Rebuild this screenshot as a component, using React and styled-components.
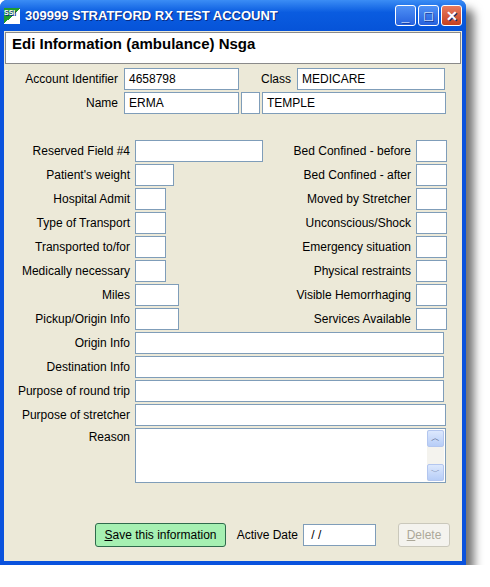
import React from "react";
import styled, { createGlobalStyle } from "styled-components";

const G = createGlobalStyle`
  body{margin:0;background:#fff;font-family:"Liberation Sans",Arial,sans-serif;font-size:12px;}
`;
const Win = styled.div`
  width:466px;height:565px;box-sizing:border-box;background:#0a52dd;
  border-radius:7px 7px 0 0;padding:0 4px 4px;display:flex;flex-direction:column;
  box-shadow:8px 9px 10px rgba(0,0,0,.55);
`;
const Title = styled.div`
  height:31px;display:flex;align-items:center;gap:5px;color:#fff;font-weight:bold;font-size:13px;
  background:linear-gradient(#3b8df5,#0a5ce0 40%,#0653d8);margin:0 -4px;padding:0 4px 0 4px;border-radius:7px 7px 0 0;
  text-shadow:1px 1px #0a2a80;
`;
const Logo = styled.div`width:16px;height:16px;background:linear-gradient(135deg,#1f9c2e 50%,#fff 50%);font-size:7px;color:#fff;line-height:10px;`;
const Btns = styled.div`margin-left:auto;display:flex;gap:2px;`;
const WB = styled.div`
  width:21px;height:21px;border:1px solid #fff;border-radius:3px;box-sizing:border-box;
  background:${p=>p.close?"linear-gradient(#e97a5e,#c6401f)":"linear-gradient(#4f91f5,#2661de)"};
  display:flex;align-items:center;justify-content:center;color:#fff;font-size:14px;font-weight:bold;
`;
const Body = styled.div`flex:1;background:#ece9d8;padding:1px 1px 0;display:flex;flex-direction:column;`;
const Header = styled.div`border:1px solid #8a8a8a;background:#fff;font-size:15px;font-weight:bold;padding:2px 0 0 6px;box-sizing:border-box;height:32px;`;
const Row = styled.div`display:flex;align-items:center;height:22px;margin-top:${p=>p.mt??2}px;`;
const Label = styled.div`width:${p=>p.w}px;text-align:right;padding-right:${p=>p.pr||5}px;box-sizing:border-box;color:#000;flex:none;`;
const Input = styled.div`
  width:${p=>p.w}px;height:22px;box-sizing:border-box;background:#fff;border:1px solid #7f9db9;
  padding:3px 4px;flex:none;margin-left:${p=>p.ml||0}px;
`;
const Cols = styled.div`display:flex;margin-top:26px;`;
const Col = styled.div`display:flex;flex-direction:column;`;
const Area = styled.div`width:311px;height:55px;box-sizing:border-box;border:1px solid #7f9db9;background:#fff;display:flex;justify-content:flex-end;padding:1px;`;
const Scroll = styled.div`width:17px;display:flex;flex-direction:column;justify-content:space-between;background:#f4f3ee;`;
const Arrow = styled.div`height:17px;background:linear-gradient(#dce8fd,#b7cdf7);border:1px solid #b3c6ef;border-radius:2px;box-sizing:border-box;color:#4d6185;font-size:9px;text-align:center;line-height:15px;`;
const Bottom = styled.div`display:flex;align-items:center;margin-top:40px;padding-left:90px;`;
const Btn = styled.div`
  height:24px;box-sizing:border-box;border:1px solid ${p=>p.dis?"#cac8bb":"#2f6a4c"};border-radius:3px;
  background:${p=>p.dis?"#f4f3ee":"#a6f0b2"};color:${p=>p.dis?"#aca899":"#000"};
  display:flex;align-items:center;justify-content:center;width:${p=>p.w}px;font-size:12px;
`;

const left=[["Reserved Field #4",128],["Patient's weight",39],["Hospital Admit",31],["Type of Transport",31],["Transported to/for",31],["Medically necessary",31],["Miles",44],["Pickup/Origin Info",44]];
const right=["Bed Confined - before","Bed Confined - after","Moved by Stretcher","Unconscious/Shock","Emergency situation","Physical restraints","Visible Hemorrhaging","Services Available"];
const full=["Origin Info","Destination Info","Purpose of round trip","Purpose of stretcher"];

export default function App(){
  return <><G/><Win>
    <Title><Logo>SSI</Logo>309999 STRATFORD RX TEST ACCOUNT
      <Btns><WB>_</WB><WB>□</WB><WB close>✕</WB></Btns></Title>
    <Body>
      <Header>Edi Information (ambulance) Nsga</Header>
      <Row mt={4}><Label w={118}>Account Identifier</Label><Input w={115} ml={1}>4658798</Input><Label w={57}>Class</Label><Input w={148} ml={1}>MEDICARE</Input></Row>
      <Row><Label w={118}>Name</Label><Input w={115} ml={1}>ERMA</Input><Input w={19} ml={2}/><Input w={184} ml={2}>TEMPLE</Input>
      </Row>
      <Cols>
        <Col>{left.map(([l,w],i)=><Row key={l} mt={i?2:0} style={{width:282}}><Label w={130}>{l}</Label><Input w={w}/></Row>)}</Col>
        <Col>{right.map((l,i)=><Row key={l} mt={i?2:0}><Label w={129}>{l}</Label><Input w={31}/></Row>)}</Col>
      </Cols>
      {full.map(l=><Row key={l}><Label w={130}>{l}</Label><Input w={l.includes("stretcher")?311:309}/></Row>)}
      <Row mt={2} style={{height:55,alignItems:"flex-start"}}><Label w={130} style={{paddingTop:2}}>Reason</Label>
        <Area><Scroll><Arrow>︿</Arrow><Arrow>﹀</Arrow></Scroll></Area></Row>
      <Bottom><Btn w={131}><span><u>S</u>ave this information</span></Btn>
        <Label w={77}>Active Date</Label><Input w={73}>&nbsp;/ /</Input>
        <Btn dis w={52} style={{marginLeft:22}}><u>D</u>elete</Btn></Bottom>
    </Body>
  </Win></>;
}
